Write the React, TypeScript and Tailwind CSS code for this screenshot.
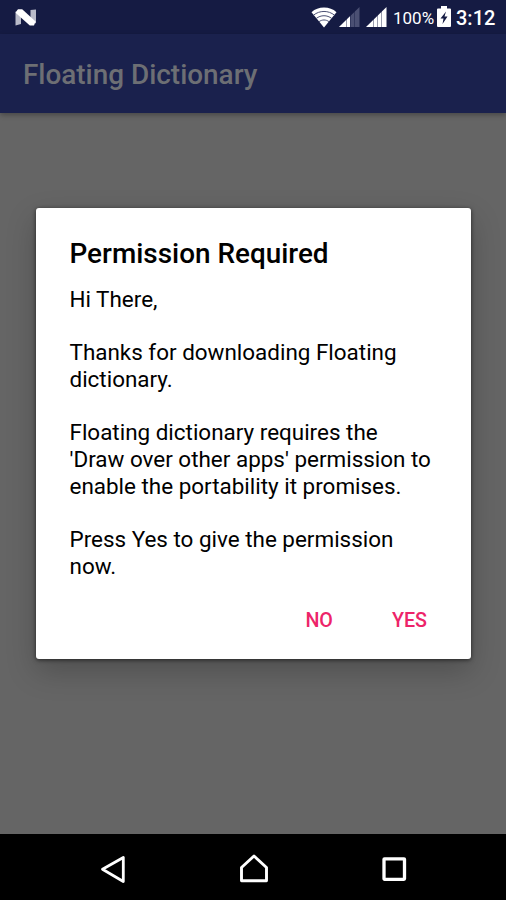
import type { ReactNode } from "react";

const paragraphs: string[][] = [
  ["Hi There,"],
  ["Thanks for downloading Floating", "dictionary."],
  [
    "Floating dictionary requires the",
    "'Draw over other apps' permission to",
    "enable the portability it promises.",
  ],
  ["Press Yes to give the permission", "now."],
];

function NougatIcon() {
  return (
    <svg width="22" height="20" viewBox="0 0 22 20" className="ml-[15px] mt-[8px]">
      <path d="M.5 3.500 6 7v9L.5 17.500zM15.500 2l5.500-.5v14l-5.500-3z" fill="#b9bbc9" />
      <path d="M.8 4 3 1.200h4.200L20.600 13.500 19 17.500h-4.200L.8 5z" fill="#fff" />
    </svg>
  );
}

function WifiIcon() {
  return (
    <svg width="26" height="21" viewBox="0 0 26 21" fill="none">
      <path d="M.5 5.200C4 2.200 8 .6 13 .6s9 1.600 12.500 4.600L13 20.500z" fill="#fff" />
      <path d="M2.500 8.200c6-5 15-5 21 0" stroke="#4b5073" strokeWidth="1" />
      <path d="M5.200 11.500c4.700-3.700 10.900-3.700 15.600 0" stroke="#4b5073" strokeWidth="1" />
      <path d="M8 14.700c3-2.300 7-2.300 10 0" stroke="#4b5073" strokeWidth="1" />
    </svg>
  );
}

function SignalIcon({ weak }: { weak?: boolean }) {
  return (
    <svg width="21" height="20" viewBox="0 0 21 20">
      <path d="M0 20 20.500 0v20z" fill={weak ? "#4b5073" : "#fff"} />
      {weak && <path d="M0 20 11 9.300V20z" fill="#fff" />}
      <path d="M7.500 12v8M11.500 8v12M15.500 4v16" stroke="#151b43" strokeOpacity=".55" strokeWidth=".8" />
    </svg>
  );
}

function BatteryIcon() {
  return (
    <svg width="14" height="21" viewBox="0 0 14 21">
      <path d="M4 0h6v2.500h3q1 0 1 1V20q0 1-1 1H1q-1 0-1-1V3.500q0-1 1-1h3z" fill="#fff" />
      <path d="M9 5.500 3.500 12.500h3l-1 5.500 5-7.500h-3z" fill="#151b43" />
    </svg>
  );
}

function StatusBar() {
  return (
    <div className="flex h-[34px] shrink-0 bg-[#151b43] text-white">
      <NougatIcon />
      <div className="ml-auto flex pr-[10px]">
        <div className="mt-[7px] flex">
          <WifiIcon />
          <span className="ml-[2px]">
            <SignalIcon weak />
          </span>
          <span className="ml-[6px]">
            <SignalIcon />
          </span>
        </div>
        <span className="ml-[6px] mt-[1px] w-[44px] whitespace-nowrap text-[17px] leading-[34px]">
          100%
        </span>
        <span className="mt-[6px]">
          <BatteryIcon />
        </span>
        <span className="ml-[5px] w-[40px] whitespace-nowrap text-[20px] font-medium leading-[36px]">
          3:12
        </span>
      </div>
    </div>
  );
}

function DialogButton({ children }: { children: ReactNode }) {
  return (
    <button type="button" className="text-[19.700px] font-medium leading-[24px] text-[#ed2469]">
      {children}
    </button>
  );
}

function PermissionDialog() {
  return (
    <div
      role="dialog"
      className="ml-[35.500px] mt-[95px] h-[451px] w-[435.500px] rounded-[3px] bg-white pl-[34px] pt-[29px] text-black shadow-[0_1px_4px_rgba(0,0,0,0.6),0_12px_30px_rgba(0,0,0,0.22)]"
    >
      <h2 className="whitespace-nowrap text-[27.900px] font-medium leading-[34px]">
        Permission Required
      </h2>
      <div className="mt-[15px] flex flex-col gap-[26.700px] text-[22.450px] leading-[26.700px]">
        {paragraphs.map((lines) => (
          <p key={lines[0]}>
            {lines.map((line) => (
              <span key={line} className="block whitespace-nowrap">
                {line}
              </span>
            ))}
          </p>
        ))}
      </div>
      <div className="mt-[29px] flex justify-end gap-[59px] pr-[44px]">
        <DialogButton>NO</DialogButton>
        <DialogButton>YES</DialogButton>
      </div>
    </div>
  );
}

function NavigationBar() {
  return (
    <nav className="flex h-[66px] shrink-0 items-start bg-black pt-[20px]">
      <svg width="28" height="30" viewBox="0 0 28 30" className="ml-[99px]">
        <path d="M24.300 3.500v24L3.500 15.300z" fill="none" stroke="#fff" strokeWidth="2.800" strokeLinejoin="round" />
      </svg>
      <svg width="30" height="30" viewBox="0 0 30 30" className="ml-[111px]">
        <path d="M3.500 13.500 16 2l12.500 11.500v13.300h-25z" fill="none" stroke="#fff" strokeWidth="2.900" strokeLinejoin="round" />
      </svg>
      <svg width="28" height="30" viewBox="0 0 28 30" className="ml-[113px]">
        <rect x="3" y="4.800" width="20.500" height="20.500" rx=".5" fill="none" stroke="#fff" strokeWidth="3.300" />
      </svg>
    </nav>
  );
}

export default function App() {
  return (
    <div className="flex h-[900px] w-[506px] flex-col overflow-hidden bg-[#656565] font-['Roboto',sans-serif]">
      <StatusBar />
      <header className="flex h-[79px] shrink-0 items-center bg-[#1a214d] pl-[23px] pt-[3px] text-[27.900px] font-medium text-[#6d6f74] shadow-[0_2px_5px_rgba(0,0,0,0.3)]">
        Floating Dictionary
      </header>
      <main className="flex-1">
        <PermissionDialog />
      </main>
      <NavigationBar />
    </div>
  );
}
